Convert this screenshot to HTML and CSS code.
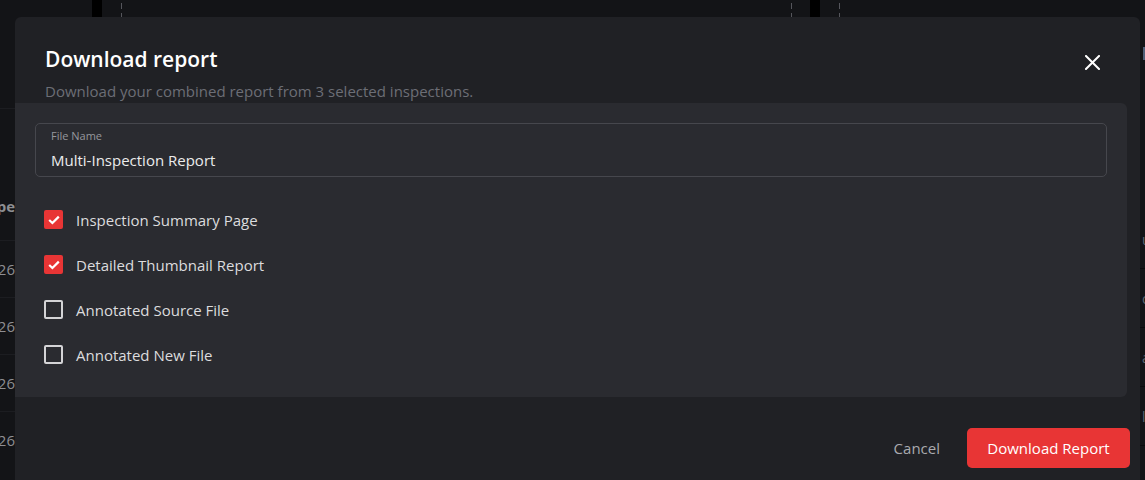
FILE: index.html
```html
<!DOCTYPE html>
<html lang="en">
<head>
    <meta charset="UTF-8">
    <meta name="viewport" content="width=device-width, initial-scale=1.0">
    <title>Download report</title>
    <link rel="stylesheet" href="styles.css">
</head>
<body>

    <!-- page behind the dialog -->
    <div class="page">
        <div class="side-left">
            <div class="cell head"><span>Type</span></div>
            <div class="cell"><span>2026</span></div>
            <div class="cell"><span>2026</span></div>
            <div class="cell"><span>2026</span></div>
            <div class="cell"><span>2026</span></div>
        </div>
        <div class="top-strip">
            <div class="bar bar-a"></div>
            <div class="dash dash-a"></div>
            <div class="dash dash-b"></div>
            <div class="bar bar-b"></div>
            <div class="dash dash-c"></div>
        </div>
        <div class="side-right">
            <div class="chip"></div>
            <div class="rcell first"><span>u</span></div>
            <div class="rcell"><span>o</span></div>
            <div class="rcell"><span>a</span></div>
            <div class="rcell"><span>l</span></div>
        </div>
    </div>

    <div class="modal">
        <div class="modal-header">
            <div class="title-row">
                <h2>Download report</h2>
                <button class="close" type="button" aria-label="Close">
                    <svg width="15" height="15" viewBox="0 0 15 15">
                        <path d="M1 1 L14 14 M14 1 L1 14" stroke="#ffffff" stroke-width="2" stroke-linecap="square"/>
                    </svg>
                </button>
            </div>
            <p class="subtitle">Download your combined report from 3 selected inspections.</p>
        </div>

        <div class="modal-body">
            <div class="field">
                <label for="fileName">File Name</label>
                <input type="text" id="fileName" value="Multi-Inspection Report">
            </div>

            <div class="options">
                <label class="option">
                    <span class="box checked">
                        <svg width="12" height="10" viewBox="0 0 12 10">
                            <path d="M1.2 5 L4.4 8 L10.8 1.6" fill="none" stroke="#ffffff" stroke-width="2.2"/>
                        </svg>
                    </span>
                    Inspection Summary Page
                </label>
                <label class="option">
                    <span class="box checked">
                        <svg width="12" height="10" viewBox="0 0 12 10">
                            <path d="M1.2 5 L4.4 8 L10.8 1.6" fill="none" stroke="#ffffff" stroke-width="2.2"/>
                        </svg>
                    </span>
                    Detailed Thumbnail Report
                </label>
                <label class="option">
                    <span class="box"></span>
                    Annotated Source File
                </label>
                <label class="option">
                    <span class="box"></span>
                    Annotated New File
                </label>
            </div>
        </div>

        <div class="modal-footer">
            <button class="btn-cancel" type="button">Cancel</button>
            <button class="btn-primary" type="button">Download Report</button>
        </div>
    </div>

</body>
</html>
```

FILE: styles.css
```css
body {
    font-family: "Open Sans", "Noto Sans", sans-serif;
    background-color: #131417;
    margin: 0;
    padding: 0;
    width: 1145px;
    height: 480px;
    overflow: hidden;
    position: relative;
}

/* background page */
.page {
    width: 100%;
    height: 100%;
}
.side-left {
    position: absolute;
    left: 0;
    top: 108px;
    width: 15px;
    display: flex;
    flex-direction: column;
}
.side-left .cell {
    height: 56px;
    display: flex;
    justify-content: flex-end;
    align-items: center;
    overflow: hidden;
    border-top: 1px solid #1c1d21;
    color: #8d8e92;
    font-size: 15px;
    white-space: nowrap;
}
.side-left .cell.head {
    height: 132px;
    font-weight: 700;
    padding-top: 62px;
    box-sizing: border-box;
}
.top-strip {
    position: absolute;
    left: 0;
    top: 0;
    width: 100%;
    height: 17px;
}
.bar {
    position: absolute;
    top: 0;
    width: 10px;
    height: 17px;
    background-color: #000;
}
.bar-a { left: 92px; }
.bar-b { left: 810px; }
.dash {
    position: absolute;
    top: 3px;
    width: 1px;
    height: 14px;
    background: repeating-linear-gradient(#55565c 0 6px, transparent 6px 10px);
}
.dash-a { left: 121px; }
.dash-b { left: 791px; }
.dash-c { left: 839px; }
.side-right {
    position: absolute;
    left: 1140px;
    top: 0;
    width: 5px;
    color: #5d6672;
    font-size: 14px;
}
.chip {
    margin-top: 47px;
    margin-left: 3px;
    width: 2px;
    height: 13px;
    background-color: #4f6078;
}
.rcell {
    height: 58px;
    border-bottom: 1px solid #0a0a0c;
    display: flex;
    align-items: center;
    overflow: hidden;
    white-space: nowrap;
    padding-left: 2px;
}
.rcell.first { margin-top: 150px; }

/* dialog */
.modal {
    position: absolute;
    left: 15px;
    top: 17px;
    width: 1125px;
    height: 480px;
    background-color: #202125;
    border-radius: 6px;
}
.modal-header {
    padding: 27px 30px 0 30px;
}
.title-row {
    display: flex;
    justify-content: space-between;
    align-items: center;
}
h2 {
    margin: 0;
    font-size: 21px;
    line-height: 30px;
    font-weight: 600;
    color: #ffffff;
}
.close {
    background: none;
    border: none;
    padding: 0;
    margin-right: 10px;
    margin-top: 6px;
    width: 15px;
    height: 15px;
    cursor: pointer;
    display: flex;
}
.subtitle {
    margin: 7px 0 0 0;
    font-size: 15px;
    line-height: 20px;
    color: #6c6e76;
}
.modal-body {
    margin-top: 2px;
    margin-right: 13px;
    background-color: #2a2b30;
    border-radius: 0 6px 6px 0;
    padding: 20px 20px 20px 20px;
}
.field {
    border: 1px solid #46474d;
    border-radius: 5px;
    padding: 4px 15px 6px 15px;
}
.field label {
    display: block;
    font-size: 11px;
    line-height: 15px;
    color: #96979c;
    margin-bottom: 7px;
}
.field input {
    display: block;
    width: 100%;
    padding: 0;
    border: none;
    background: none;
    outline: none;
    font-family: inherit;
    font-size: 15px;
    line-height: 20px;
    height: 20px;
    color: #ececec;
}
.options {
    margin-top: 20px;
    display: flex;
    flex-direction: column;
}
.option {
    height: 45px;
    display: flex;
    align-items: center;
    gap: 13px;
    padding-left: 9px;
    font-size: 15px;
    color: #dcdcde;
    cursor: pointer;
}
.box {
    width: 19px;
    height: 19px;
    box-sizing: border-box;
    border: 2px solid #d4d4d6;
    border-radius: 2px;
    display: flex;
    align-items: center;
    justify-content: center;
}
.box.checked {
    background-color: #e83535;
    border-color: #e83535;
}
.modal-footer {
    display: flex;
    justify-content: flex-end;
    align-items: center;
    padding: 31px 10px 0 0;
}
.btn-cancel {
    background: none;
    border: none;
    font-family: inherit;
    font-size: 15px;
    color: #a9aaae;
    padding: 0;
    margin-right: 27px;
    cursor: pointer;
}
.btn-primary {
    background-color: #e83535;
    color: #ffffff;
    border: none;
    border-radius: 5px;
    width: 163px;
    height: 40px;
    font-family: inherit;
    font-size: 15px;
    cursor: pointer;
}
```
